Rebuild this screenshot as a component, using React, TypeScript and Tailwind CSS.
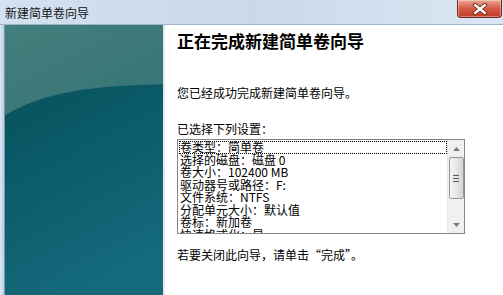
import React from 'react';

const cjk = { fontFamily: '"Noto Sans CJK SC", "Noto Sans", sans-serif' };

const settings = [
  '卷类型：简单卷',
  '选择的磁盘：磁盘 0',
  '卷大小：102400 MB',
  '驱动器号或路径：F:',
  '文件系统：NTFS',
  '分配单元大小：默认值',
  '卷标：新加卷',
  '快速格式化：是',
];

const SidePanel: React.FC = () => (
  <svg width="158" height="270" viewBox="0 0 158 270" className="block">
    <defs>
      <linearGradient id="topFill" x1="0" y1="0" x2="0.3" y2="1">
        <stop offset="0" stopColor="#437f7c" />
        <stop offset="1" stopColor="#2c6a6f" />
      </linearGradient>
      <linearGradient id="botFill" x1="0" y1="0" x2="0.4" y2="1">
        <stop offset="0" stopColor="#07515c" />
        <stop offset="0.5" stopColor="#0c5d6b" />
        <stop offset="1" stopColor="#14697b" />
      </linearGradient>
    </defs>
    <rect x="0" y="0" width="158" height="270" fill="url(#topFill)" />
    <path d="M0 90 C 30 72, 70 60, 158 59 L158 270 L0 270 Z" fill="url(#botFill)" />
    <path d="M0 90 C 30 72, 70 60, 158 59" fill="none" stroke="#3f7f80" strokeWidth="1" opacity="0.6" />
  </svg>
);

const CloseButton: React.FC = () => (
  <div className="w-[45px] h-[18px] rounded-b-[4px] border border-t-0 border-[#6e2a22] bg-gradient-to-b from-[#e8a897] via-[#d35a44] to-[#c23a26] flex items-center justify-center shadow-[inset_0_0_0_1px_rgba(255,255,255,0.35)]">
    <svg width="16" height="12" viewBox="0 0 16 12">
      <path d="M3 2 L13 10 M13 2 L3 10" stroke="#5a1d16" strokeWidth="4" strokeLinecap="round" />
      <path d="M3 2 L13 10 M13 2 L3 10" stroke="#ffffff" strokeWidth="2.4" strokeLinecap="round" />
    </svg>
  </div>
);

const Scrollbar: React.FC = () => (
  <div className="w-[17px] h-full bg-[#f0f0f0] border-l border-[#e6e6e6] flex flex-col items-center">
    <div className="h-[17px] flex items-center justify-center">
      <svg width="7" height="4" viewBox="0 0 7 4"><path d="M0 4 L3.5 0 L7 4 Z" fill="#7a7a7a" /></svg>
    </div>
    <div className="w-[15px] h-[42px] rounded-[2px] border border-[#979797] bg-gradient-to-r from-[#f4f4f4] via-[#e6e6e6] to-[#d4d4d4] flex flex-col items-center justify-center gap-[2px]">
      <div className="w-[6px] h-[1px] bg-[#5a5a5a]" />
      <div className="w-[6px] h-[1px] bg-[#5a5a5a]" />
      <div className="w-[6px] h-[1px] bg-[#5a5a5a]" />
    </div>
    <div className="flex-1" />
    <div className="h-[17px] flex items-center justify-center">
      <svg width="7" height="4" viewBox="0 0 7 4"><path d="M0 0 L3.5 4 L7 0 Z" fill="#7a7a7a" /></svg>
    </div>
  </div>
);

const App: React.FC = () => {
  return (
    <div className="w-[503px] h-[295px] overflow-hidden flex flex-col bg-white" style={cjk}>
      {/* Title bar */}
      <div className="h-[25px] shrink-0 flex items-start justify-between bg-gradient-to-r from-[#d3e1f0] via-[#c9d9ea] to-[#dbe6f2] border-b border-[#9fb3c8]">
        <div className="pl-[5px] pt-[5px] text-[12px] leading-[16px] text-[#151515]">新建简单卷向导</div>
        <div className="pr-[1px]">
          <CloseButton />
        </div>
      </div>

      {/* Body */}
      <div className="flex flex-1 min-h-0">
        <div className="w-[5px] shrink-0 bg-gradient-to-r from-[#dbe7f4] to-[#b9cde2] border-r border-[#7f98b0]" />
        <div className="w-[158px] shrink-0 overflow-hidden">
          <SidePanel />
        </div>
        <div className="w-[2px] shrink-0 bg-[#e4eaec]" />

        <div className="flex-1 pl-[12px] pt-[6px] text-[#000]">
          <div className="text-[17px] leading-[20px] font-bold">正在完成新建简单卷向导</div>

          <div className="mt-[35px] text-[12px] leading-[14px]">您已经成功完成新建简单卷向导。</div>

          <div className="mt-[22px] text-[12px] leading-[14px]">已选择下列设置：</div>

          <div className="mt-[3px] w-[288px] h-[95px] border border-[#828790] flex">
            <div className="flex-1 overflow-hidden pt-[1px] pl-[1px] text-[12px] leading-[12.5px]">
              {settings.map((s, i) => (
                <div
                  key={s}
                  className={`pl-[1px] whitespace-nowrap ${i === 0 ? 'outline outline-1 outline-dotted outline-[#000] -outline-offset-1' : ''}`}
                >
                  {s}
                </div>
              ))}
            </div>
            <Scrollbar />
          </div>

          <div className="mt-[14px] text-[12px] leading-[14px]">若要关闭此向导，请单击“完成”。</div>
        </div>
      </div>
    </div>
  );
};

export default App;
